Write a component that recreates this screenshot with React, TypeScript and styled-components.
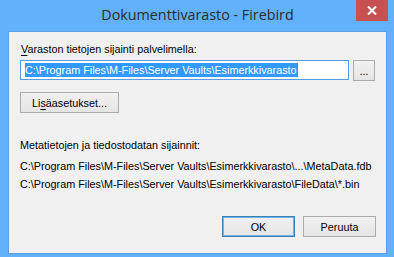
import React from 'react';
import styled, { createGlobalStyle } from 'styled-components';

const GlobalStyle = createGlobalStyle`
  html, body {
    margin: 0;
    padding: 0;
    background: #62b2fb;
  }
  * { box-sizing: border-box; }
`;

export default function App() {
  return (
    <>
      <GlobalStyle />
      <Window>
        <TitleBar>
          <Title>Dokumenttivarasto - Firebird</Title>
          <CloseButton>
            <svg width="10" height="9" viewBox="0 0 10 9">
              <path d="M1 0.5 L9 8.5 M9 0.5 L1 8.5" stroke="#fff" strokeWidth="2" />
            </svg>
          </CloseButton>
        </TitleBar>
        <Client>
          <Label><u>V</u>araston tietojen sijainti palvelimella:</Label>
          <PathRow>
            <PathInput>
              <Selected>C:\Program Files\M-Files\Server Vaults\Esimerkkivarasto</Selected>
              <Caret />
            </PathInput>
            <Button $w={22} $h={21}>...</Button>
          </PathRow>
          <Button $w={99} $h={21}>Li<u>s</u>äasetukset...</Button>
          <InfoBlock>
            <InfoLine $gap={7}>Metatietojen ja tiedostodatan sijainnit:</InfoLine>
            <InfoLine $gap={4}>C:\Program Files\M-Files\Server Vaults\Esimerkkivarasto\...\MetaData.fdb</InfoLine>
            <InfoLine $gap={0}>C:\Program Files\M-Files\Server Vaults\Esimerkkivarasto\FileData\*.bin</InfoLine>
          </InfoBlock>
          <Footer>
            <Button $w={73} $h={21} $default>OK</Button>
            <Button $w={73} $h={21}>Peruuta</Button>
          </Footer>
        </Client>
      </Window>
    </>
  );
}

const Window = styled.div`
  width: 394px;
  height: 257px;
  background: #62b2fb;
  display: flex;
  flex-direction: column;
  padding: 0 7px 3px 8px;
  font-family: 'Liberation Sans', Arial, sans-serif;
`;

const TitleBar = styled.div`
  height: 31px;
  position: relative;
  display: flex;
  justify-content: center;
  align-items: flex-start;
`;

const Title = styled.div`
  margin-top: 5px;
  font-family: 'Open Sans', 'Noto Sans', sans-serif;
  font-size: 14.3px;
  color: #2b2b2b;
`;

const CloseButton = styled.div`
  position: absolute;
  top: 0;
  right: -1px;
  width: 32px;
  height: 21px;
  background: #c75050;
  display: flex;
  align-items: center;
  justify-content: center;
`;

const Client = styled.div`
  flex: 1;
  background: #f0f0f0;
  border: 1px solid #5a9fe6;
  display: flex;
  flex-direction: column;
  padding: 10px 10px 16px 11px;
  font-size: 10.8px;
  color: #000;
`;

const Label = styled.div`
  height: 18px;
  line-height: 15px;
  padding-left: 1px;
  u { text-decoration-thickness: 1px; text-underline-offset: 2px; }
`;

const PathRow = styled.div`
  display: flex;
  gap: 4px;
  align-items: flex-start;
  margin-bottom: 11px;
`;

const PathInput = styled.div`
  width: 329px;
  height: 20px;
  background: #fff;
  border: 1px solid #569de5;
  display: flex;
  align-items: center;
  padding-left: 4px;
`;

const Selected = styled.span`
  background: #3399ff;
  color: #fff;
  height: 14px;
  line-height: 14px;
  white-space: nowrap;
`;

const Caret = styled.span`
  width: 1px;
  height: 14px;
  background: #d06a18;
`;

const Button = styled.div<{ $w: number; $h: number; $default?: boolean }>`
  width: ${p => p.$w}px;
  height: ${p => p.$h}px;
  flex: none;
  border: 1px solid ${p => (p.$default ? '#3c7fb1' : '#acacac')};
  box-shadow: ${p => (p.$default ? 'inset 0 0 0 1px #6fb2ee' : 'none')};
  background: linear-gradient(#f0f0f0, #e5e5e5);
  display: flex;
  align-items: center;
  justify-content: center;
  white-space: nowrap;
  u { text-decoration-thickness: 1px; text-underline-offset: 2px; }
`;

const InfoBlock = styled.div`
  margin-top: 25px;
  display: flex;
  flex-direction: column;
`;

const InfoLine = styled.div<{ $gap: number }>`
  line-height: 14px;
  white-space: nowrap;
  margin-bottom: ${p => p.$gap}px;
`;

const Footer = styled.div`
  display: flex;
  justify-content: flex-end;
  gap: 8px;
  margin-top: auto;
`;
